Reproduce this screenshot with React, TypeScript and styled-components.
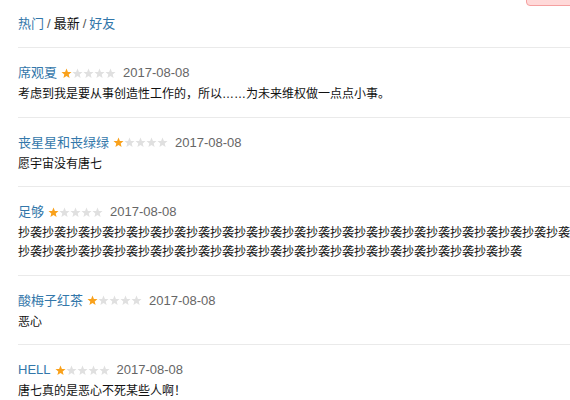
import React from 'react';
import styled, { createGlobalStyle } from 'styled-components';

const Global = createGlobalStyle`
	body {
		margin: 0;
		background: #fff;
		font-family: "Liberation Sans", Arial, "Noto Sans CJK SC", sans-serif;
		color: #111;
		overflow: hidden;
	}
`;

const Page = styled.div`
	position: relative;
	width: 570px;
	height: 400px;
	padding-left: 18px;
	box-sizing: border-box;
	overflow: hidden;
`;

const CornerButton = styled.div`
	position: absolute;
	top: -20px;
	right: -10px;
	width: 52px;
	height: 24px;
	border-radius: 4px;
	background: #ffd9d9;
	border: 1px solid #f5a0a0;
`;

const Tabs = styled.div`
	font-size: 13px;
	line-height: 20px;
	padding: 14px 0 13px;
`;

const Tab = styled.a<{ $active?: boolean }>`
	color: ${(p) => (p.$active ? '#111' : '#3377aa')};
	text-decoration: none;
`;

const Slash = styled.span`
	color: #555;
	margin: 0 3px;
`;

const Item = styled.div`
	border-top: 1px solid #eaeaea;
	padding: 15px 0 12.5px;
`;

const Meta = styled.div`
	display: flex;
	align-items: center;
	font-size: 13px;
	line-height: 20px;
	height: 20px;
	margin-bottom: 2px;
`;

const Name = styled.a`
	color: #3377aa;
	text-decoration: none;
`;

const Stars = styled.svg`
	margin: 0 7px 0 4px;
	display: block;
`;

const Date = styled.span`
	color: #666;
`;

const Comment = styled.p`
	margin: 0;
	font-size: 12px;
	line-height: 19px;
	word-break: break-all;
`;

const starPath = 'M5.5 0.5 L6.9 3.9 L10.5 4.1 L7.7 6.4 L8.6 10 L5.5 8 L2.4 10 L3.3 6.4 L0.5 4.1 L4.1 3.9 Z';

const Rating = ({ value }: { value: number }) => (
	<Stars width="55" height="11" viewBox="0 0 55 11">
		{[0, 1, 2, 3, 4].map((i) => (
			<path key={i} d={starPath} transform={`translate(${i * 11} 0)`} fill={i < value ? '#f9a11b' : '#e0e0e0'} />
		))}
	</Stars>
);

const reviews = [
	{ name: '席观夏', text: '考虑到我是要从事创造性工作的，所以……为未来维权做一点点小事。' },
	{ name: '丧星星和丧绿绿', text: '愿宇宙没有唐七' },
	{ name: '足够', text: '抄袭'.repeat(44) },
	{ name: '酸梅子红茶', text: '恶心' },
	{ name: 'HELL', text: '唐七真的是恶心不死某些人啊！' },
];

export default function App() {
	return (
		<Page>
			<Global />
			<CornerButton />
			<Tabs>
				<Tab href="#">热门</Tab>
				<Slash>/</Slash>
				<Tab $active>最新</Tab>
				<Slash>/</Slash>
				<Tab href="#">好友</Tab>
			</Tabs>
			{reviews.map((r) => (
				<Item key={r.name}>
					<Meta>
						<Name href="#">{r.name}</Name>
						<Rating value={1} />
						<Date>2017-08-08</Date>
					</Meta>
					<Comment>{r.text}</Comment>
				</Item>
			))}
		</Page>
	);
}
